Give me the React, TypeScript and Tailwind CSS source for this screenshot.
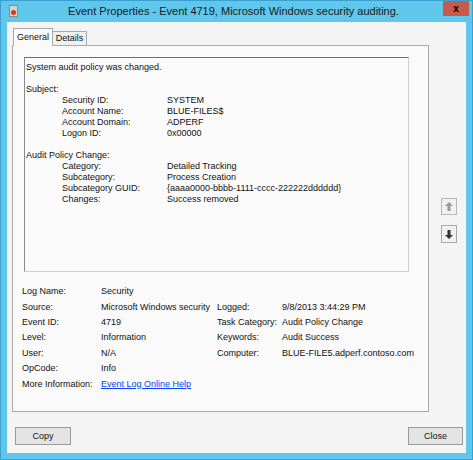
import React from 'react';

const font = { fontFamily: '"Liberation Sans", Arial, sans-serif' };

const subjectRows = [
  ['Security ID:', 'SYSTEM'],
  ['Account Name:', 'BLUE-FILES$'],
  ['Account Domain:', 'ADPERF'],
  ['Logon ID:', '0x00000'],
];

const policyRows = [
  ['Category:', 'Detailed Tracking'],
  ['Subcategory:', 'Process Creation'],
  ['Subcategory GUID:', '{aaaa0000-bbbb-1111-cccc-222222dddddd}'],
  ['Changes:', 'Success removed'],
];

const InfoRow = ({ label, value }: { label: string; value: string }) => (
  <div className="flex h-[11px] items-center">
    <span className="w-[105px] pl-[36px] box-content">{label}</span>
    <span>{value}</span>
  </div>
);

const Field = ({ label, value, link }: { label: string; value: string; link?: boolean }) => (
  <>
    <span className="whitespace-nowrap">{label}</span>
    {link ? (
      <span className="whitespace-nowrap text-[#0645ff] underline">{value}</span>
    ) : (
      <span className="whitespace-nowrap">{value}</span>
    )}
  </>
);

export default function App() {
  return (
    <div
      className="w-[473px] h-[460px] flex flex-col bg-[#5fc6ec] border border-[#3b9fcf] text-[#111] text-[9px] leading-none"
      style={font}
    >
      {/* title bar */}
      <div className="h-[21px] flex items-start relative">
        <div className="ml-[8px] mt-[4px] w-[9px] h-[12px] bg-[#d8d4c8] border border-[#8a8a8a] flex items-end justify-center">
          <div className="w-[5px] h-[5px] rounded-full bg-[#d23a2a] mb-[1px]" />
        </div>
        <div className="flex-1 text-center pt-[5px] pl-[6px] text-[11px] text-[#1a1a1a] whitespace-nowrap">
          Event Properties - Event 4719, Microsoft Windows security auditing.
        </div>
        <div className="mr-[3px] w-[26px] h-[15px] bg-[#c75a4a] flex items-center justify-center text-[10px] font-bold text-black">
          x
        </div>
      </div>

      {/* client area */}
      <div className="flex-1 mx-[6px] mb-[6px] bg-[#f4f4f4] flex flex-col pl-[5px] pt-[6px]">
        <div className="flex">
          <div className="flex flex-col w-[417px]">
            {/* tabs */}
            <div className="flex items-end h-[17px] pl-[1px]">
              <div className="h-[18px] w-[40px] bg-[#fafafa] border border-b-0 border-[#a9a9a9] flex items-center justify-center relative top-[1px] z-10">
                General
              </div>
              <div className="h-[14px] w-[34px] bg-[#f0f0f0] border border-l-0 border-b-0 border-[#a9a9a9] flex items-center justify-center">
                Details
              </div>
            </div>
            {/* panel */}
            <div className="h-[367px] bg-[#fafafa] border border-[#a9a9a9] flex flex-col">
              <div className="mt-[11px] ml-[11px] w-[385px] h-[215px] bg-[#fbfbfb] border border-[#d0d0d0] border-t-[#6e6e6e] border-l-[#8a8a8a] px-[1px] pt-[4px]">
                <div className="h-[11px] flex items-center">System audit policy was changed.</div>
                <div className="h-[11px]" />
                <div className="h-[11px] flex items-center">Subject:</div>
                {subjectRows.map(([l, v]) => (
                  <InfoRow key={l} label={l} value={v} />
                ))}
                <div className="h-[11px]" />
                <div className="h-[11px] flex items-center">Audit Policy Change:</div>
                {policyRows.map(([l, v]) => (
                  <InfoRow key={l} label={l} value={v} />
                ))}
              </div>
              <div className="mt-[12px] ml-[9px] grid grid-cols-[79px_116px_65px_1fr] auto-rows-[15.4px] items-center">
                <Field label="Log Name:" value="Security" />
                <span />
                <span />
                <Field label="Source:" value="Microsoft Windows security" />
                <Field label="Logged:" value="9/8/2013 3:44:29 PM" />
                <Field label="Event ID:" value="4719" />
                <Field label="Task Category:" value="Audit Policy Change" />
                <Field label="Level:" value="Information" />
                <Field label="Keywords:" value="Audit Success" />
                <Field label="User:" value="N/A" />
                <Field label="Computer:" value="BLUE-FILE5.adperf.contoso.com" />
                <Field label="OpCode:" value="Info" />
                <span />
                <span />
                <Field label="More Information:" value="Event Log Online Help" link />
              </div>
            </div>
          </div>
          {/* arrows */}
          <div className="flex flex-col ml-[12px] mt-[170px] gap-[10px]">
            <div className="w-[16px] h-[17px] border border-[#b8b8b8] bg-[#f0f0f0] flex items-center justify-center">
              <svg width="8" height="9" viewBox="0 0 8 9">
                <path d="M4 0 L8 4 L5.5 4 L5.5 9 L2.5 9 L2.5 4 L0 4 Z" fill="#9a9a9a" />
              </svg>
            </div>
            <div className="w-[16px] h-[18px] border border-[#a8a8a8] bg-[#f0f0f0] flex items-center justify-center">
              <svg width="8" height="9" viewBox="0 0 8 9">
                <path d="M2.5 0 L5.5 0 L5.5 5 L8 5 L4 9 L0 5 L2.5 5 Z" fill="#333" />
              </svg>
            </div>
          </div>
        </div>
        {/* buttons */}
        <div className="flex justify-between mt-[15px] pl-[3px] pr-[3px]">
          <div className="w-[56px] h-[18px] border border-[#9a9a9a] bg-[#e4e4e4] flex items-center justify-center">
            Copy
          </div>
          <div className="w-[55px] h-[18px] border border-[#9a9a9a] bg-[#e4e4e4] flex items-center justify-center">
            Close
          </div>
        </div>
      </div>
    </div>
  );
}
